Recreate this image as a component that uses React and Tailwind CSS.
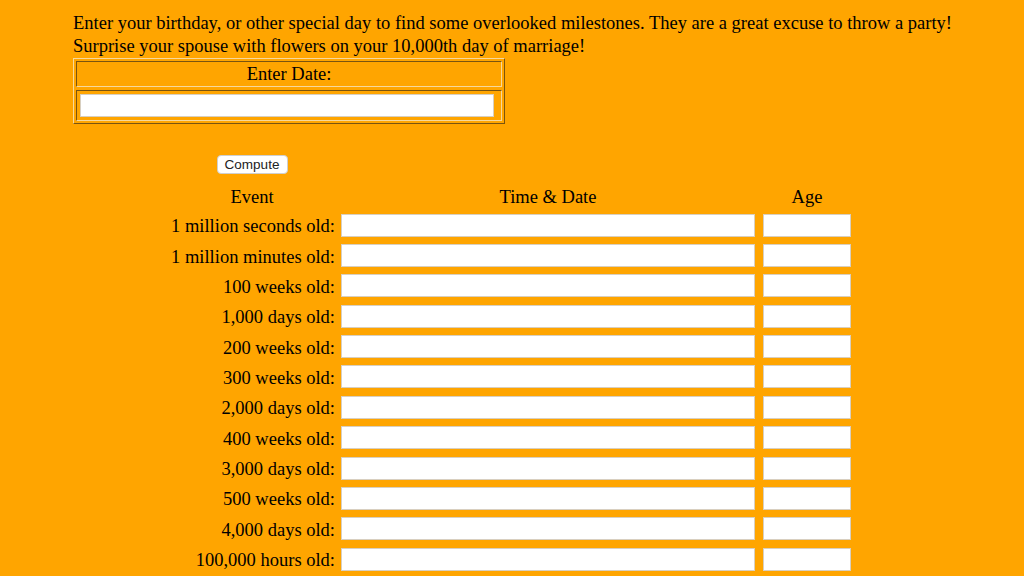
import React from "react";

const rows = [
  "1 million seconds old:",
  "1 million minutes old:",
  "100 weeks old:",
  "1,000 days old:",
  "200 weeks old:",
  "300 weeks old:",
  "2,000 days old:",
  "400 weeks old:",
  "3,000 days old:",
  "500 weeks old:",
  "4,000 days old:",
  "100,000 hours old:",
];

export default function App() {
  return (
    <div
      className="min-h-screen w-full bg-[#ffa500] text-black text-[18.5px] leading-[23px] overflow-hidden"
      style={{ fontFamily: '"Liberation Serif", "Times New Roman", serif' }}
    >
      <div className="pl-[73px] pt-[12px]">
        <div>
          Enter your birthday, or other special day to find some overlooked milestones. They are a great excuse to throw a party!
        </div>
        <div>Surprise your spouse with flowers on your 10,000th day of marriage!</div>
      </div>

      <div className="ml-[73px] w-[432px] border border-t-[#f7d89c] border-l-[#f7d89c] border-r-[#7a5410] border-b-[#7a5410] p-[2px] flex flex-col gap-[3px]">
        <div className="h-[26px] pt-[1px] border border-t-[#7a5410] border-l-[#7a5410] border-r-[#f7d89c] border-b-[#f7d89c] flex items-center justify-center">
          Enter Date:
        </div>
        <div className="h-[31px] border border-t-[#7a5410] border-l-[#7a5410] border-r-[#f7d89c] border-b-[#f7d89c] flex items-center">
          <input
            type="text"
            className="ml-[3px] w-[414px] h-[23px] bg-white border border-[#d8cfc0] outline-none"
          />
        </div>
      </div>

      <div className="ml-[167px] mt-[31px]">
        <div className="w-[170px] flex justify-center">
          <button
            className="w-[71px] h-[19px] bg-white rounded-[4px] border border-[#cfcfcf] text-[13.5px] leading-[17px] text-[#222]"
            style={{ fontFamily: '"Liberation Sans", Arial, sans-serif' }}
          >
            Compute
          </button>
        </div>

        <div className="mt-[12px] h-[24px] flex items-start">
          <div className="w-[170px] text-center">Event</div>
          <div className="ml-[4px] w-[414px] text-center">Time &amp; Date</div>
          <div className="ml-[8px] w-[88px] text-center">Age</div>
        </div>

        {rows.map((r) => (
          <div key={r} className="h-[30.36px] flex items-center">
            <div className="w-[170px] text-right pr-[2px] pt-[3px] whitespace-nowrap">{r}</div>
            <input
              type="text"
              className="ml-[4px] w-[414px] h-[23px] bg-white border border-[#d8cfc0] outline-none"
            />
            <input
              type="text"
              className="ml-[8px] w-[88px] h-[23px] bg-white border border-[#d8cfc0] outline-none"
            />
          </div>
        ))}
      </div>
    </div>
  );
}
